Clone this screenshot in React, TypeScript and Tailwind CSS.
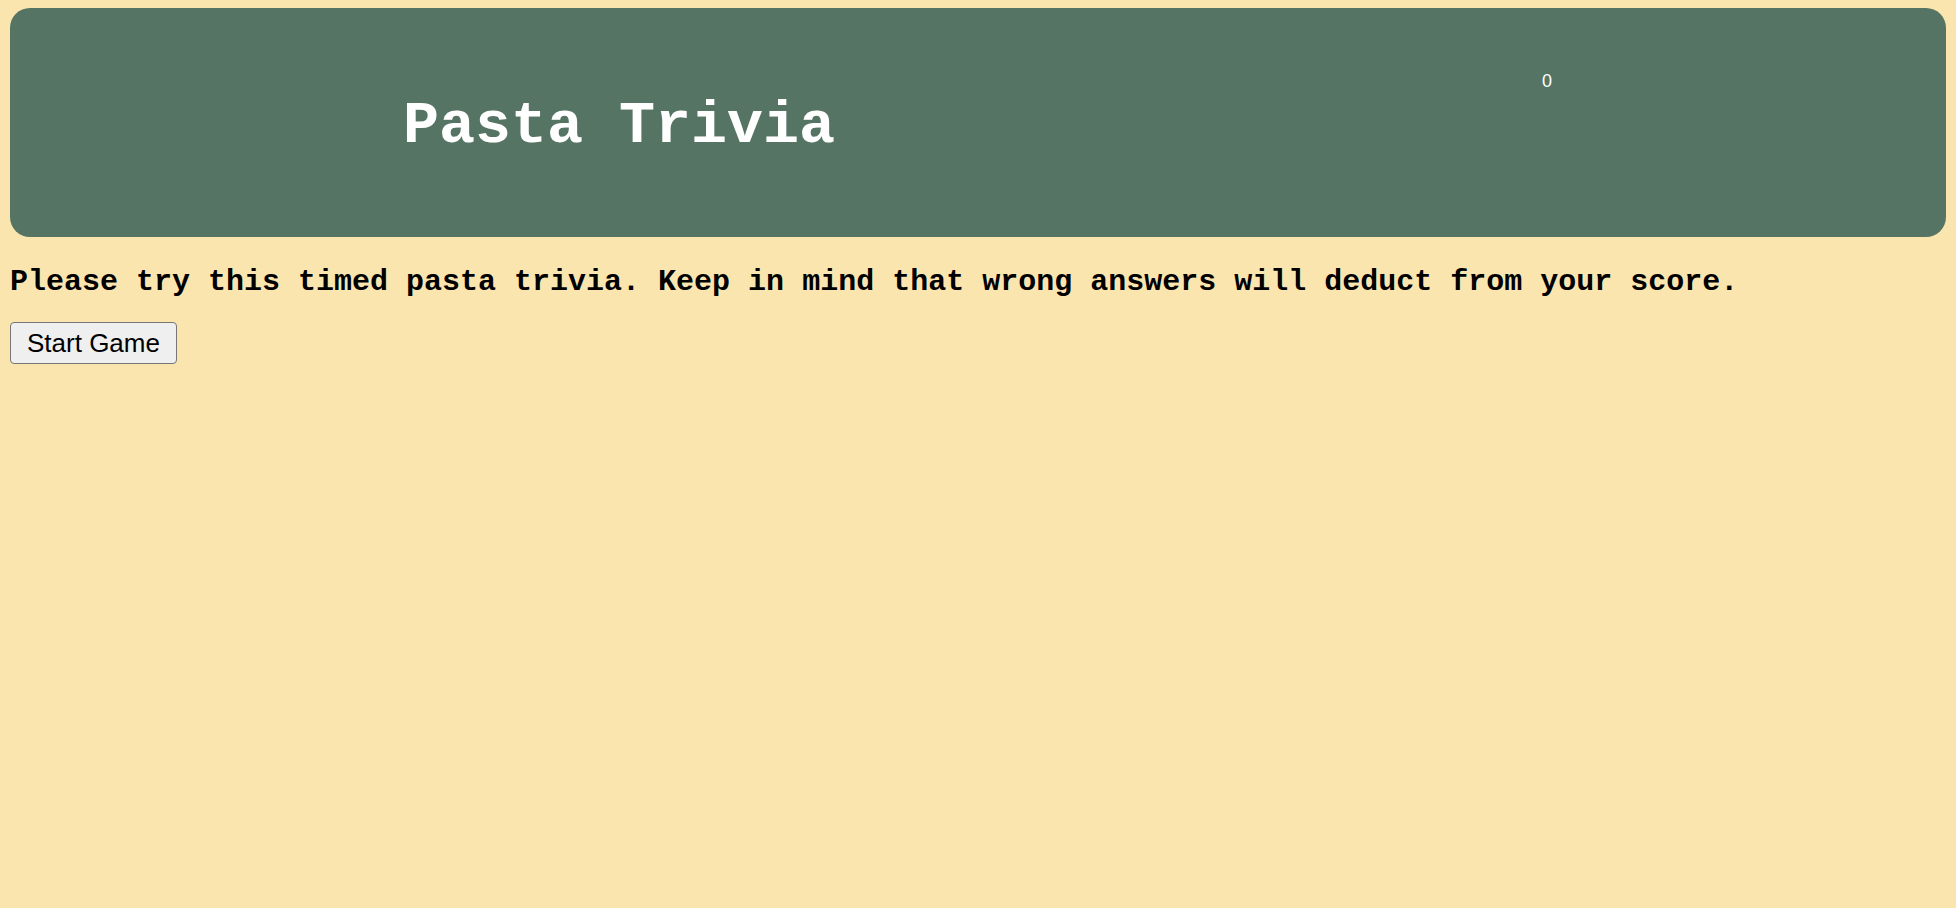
export default function App() {
  return (
    <div className="min-h-screen bg-[#fbe5af] px-[10px] pt-[8px]">
      <header className="flex h-[229px] items-start justify-between rounded-[20px] bg-[#557463] text-white">
        <h1 className="ml-[393px] mt-[84px] font-['Liberation_Mono',monospace] text-[60px] font-bold leading-[68px]">
          Pasta Trivia
        </h1>
        <span className="mr-[394px] mt-[63px] font-['Liberation_Sans',Arial,sans-serif] text-[18px] leading-[21px]">
          0
        </span>
      </header>

      <p className="mt-[28px] font-['Liberation_Mono',monospace] text-[30px] font-bold leading-[34px] text-black">
        Please try this timed pasta trivia. Keep in mind that wrong answers will deduct from your score.
      </p>

      <button className="mt-[23px] rounded-[4px] border border-[#767676] bg-[#efefef] px-[16px] font-['Liberation_Sans',Arial,sans-serif] text-[26px] leading-[40px] text-black">
        Start Game
      </button>
    </div>
  );
}
